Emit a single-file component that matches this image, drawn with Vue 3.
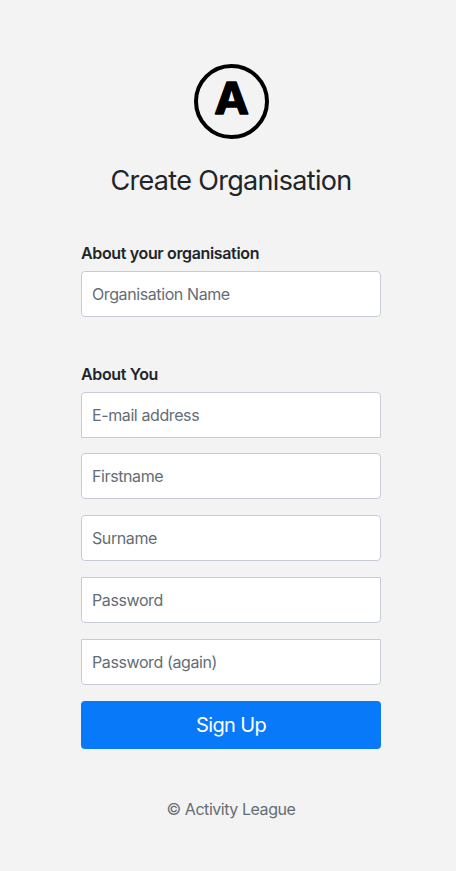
<script setup>
const people = [
  { name: 'email', type: 'email', label: 'E-mail address', shape: 'top' },
  { name: 'firstname', type: 'text', label: 'Firstname', shape: 'full' },
  { name: 'surname', type: 'text', label: 'Surname', shape: 'full' },
  { name: 'password', type: 'password', label: 'Password', shape: 'bottom' },
  { name: 'again', type: 'password', label: 'Password (again)', shape: 'bottom' },
]
</script>

<template>
  <form class="signup" @submit.prevent>
    <svg class="logo" viewBox="0 0 75 75" role="img" aria-label="Activity League">
      <circle cx="37.5" cy="37.5" r="35.5" />
      <text transform="translate(37.6 50.2) scale(1.07 1)" text-anchor="middle">A</text>
    </svg>
    <h1>Create Organisation</h1>

    <h2 class="org-title">About your organisation</h2>
    <input class="field full" type="text" placeholder="Organisation Name" aria-label="Organisation Name" />

    <h2 class="you-title">About You</h2>
    <div class="fields">
      <input
        v-for="f in people"
        :key="f.name"
        :class="['field', f.shape, f.name]"
        :type="f.type"
        :placeholder="f.label"
        :aria-label="f.label"
      />
    </div>
    <button type="submit">Sign Up</button>
    <p class="copy">© Activity League</p>
  </form>
</template>

<style>
body {
  background: #f3f3f3;
}
</style>

<style scoped>
.signup {
  box-sizing: border-box;
  display: flex;
  flex-direction: column;
  width: 381px;
  min-height: 871px;
  padding: 64px 0 0 81px;
  margin: 0;
  font-family: Inter, sans-serif;
  color: #212529;
}
.logo {
  width: 75px;
  height: 75px;
  align-self: center;
}
.logo circle {
  fill: none;
  stroke: #000;
  stroke-width: 4;
}
.logo text {
  font: 700 43.5px Inter, sans-serif;
  fill: #000;
  stroke: #000;
  stroke-width: 1.3;
  stroke-linejoin: round;
}
h1 {
  margin: 25px 0 0;
  font-size: 27px;
  font-weight: 400;
  line-height: 34px;
  letter-spacing: -0.68px;
  text-align: center;
  white-space: nowrap;
}
h2 {
  margin: 0;
  font-size: 16px;
  font-weight: 600;
  line-height: 24px;
  letter-spacing: -0.35px;
}
.org-title {
  margin: 43px 0 6px;
}
.you-title {
  margin: 45px 0 6px;
}
.field {
  box-sizing: border-box;
  display: block;
  width: 100%;
  height: 46px;
  margin: 0;
  padding: 0 10px;
  border: 1px solid #c8ccd6;
  border-radius: 4px;
  background: #fff;
  font: 400 16px Inter, sans-serif;
  letter-spacing: -0.4px;
  outline: none;
}
.field::placeholder {
  color: #656d74;
  opacity: 1;
}
.top {
  border-radius: 4px 4px 0 0;
}
.bottom {
  border-radius: 0 0 4px 4px;
}
.fields {
  display: flex;
  flex-direction: column;
  gap: 16px;
}
.email {
  margin-bottom: -1px;
}
button {
  height: 48px;
  margin: 16px 0 0;
  padding: 0;
  border: 0;
  border-radius: 4px;
  background: #0779f9;
  color: #fff;
  font: 400 20px Inter, sans-serif;
  letter-spacing: -0.65px;
}
.copy {
  margin: 48px 0 0;
  font-size: 16px;
  line-height: 24px;
  letter-spacing: -0.45px;
  text-align: center;
  color: #656d74;
}
</style>
